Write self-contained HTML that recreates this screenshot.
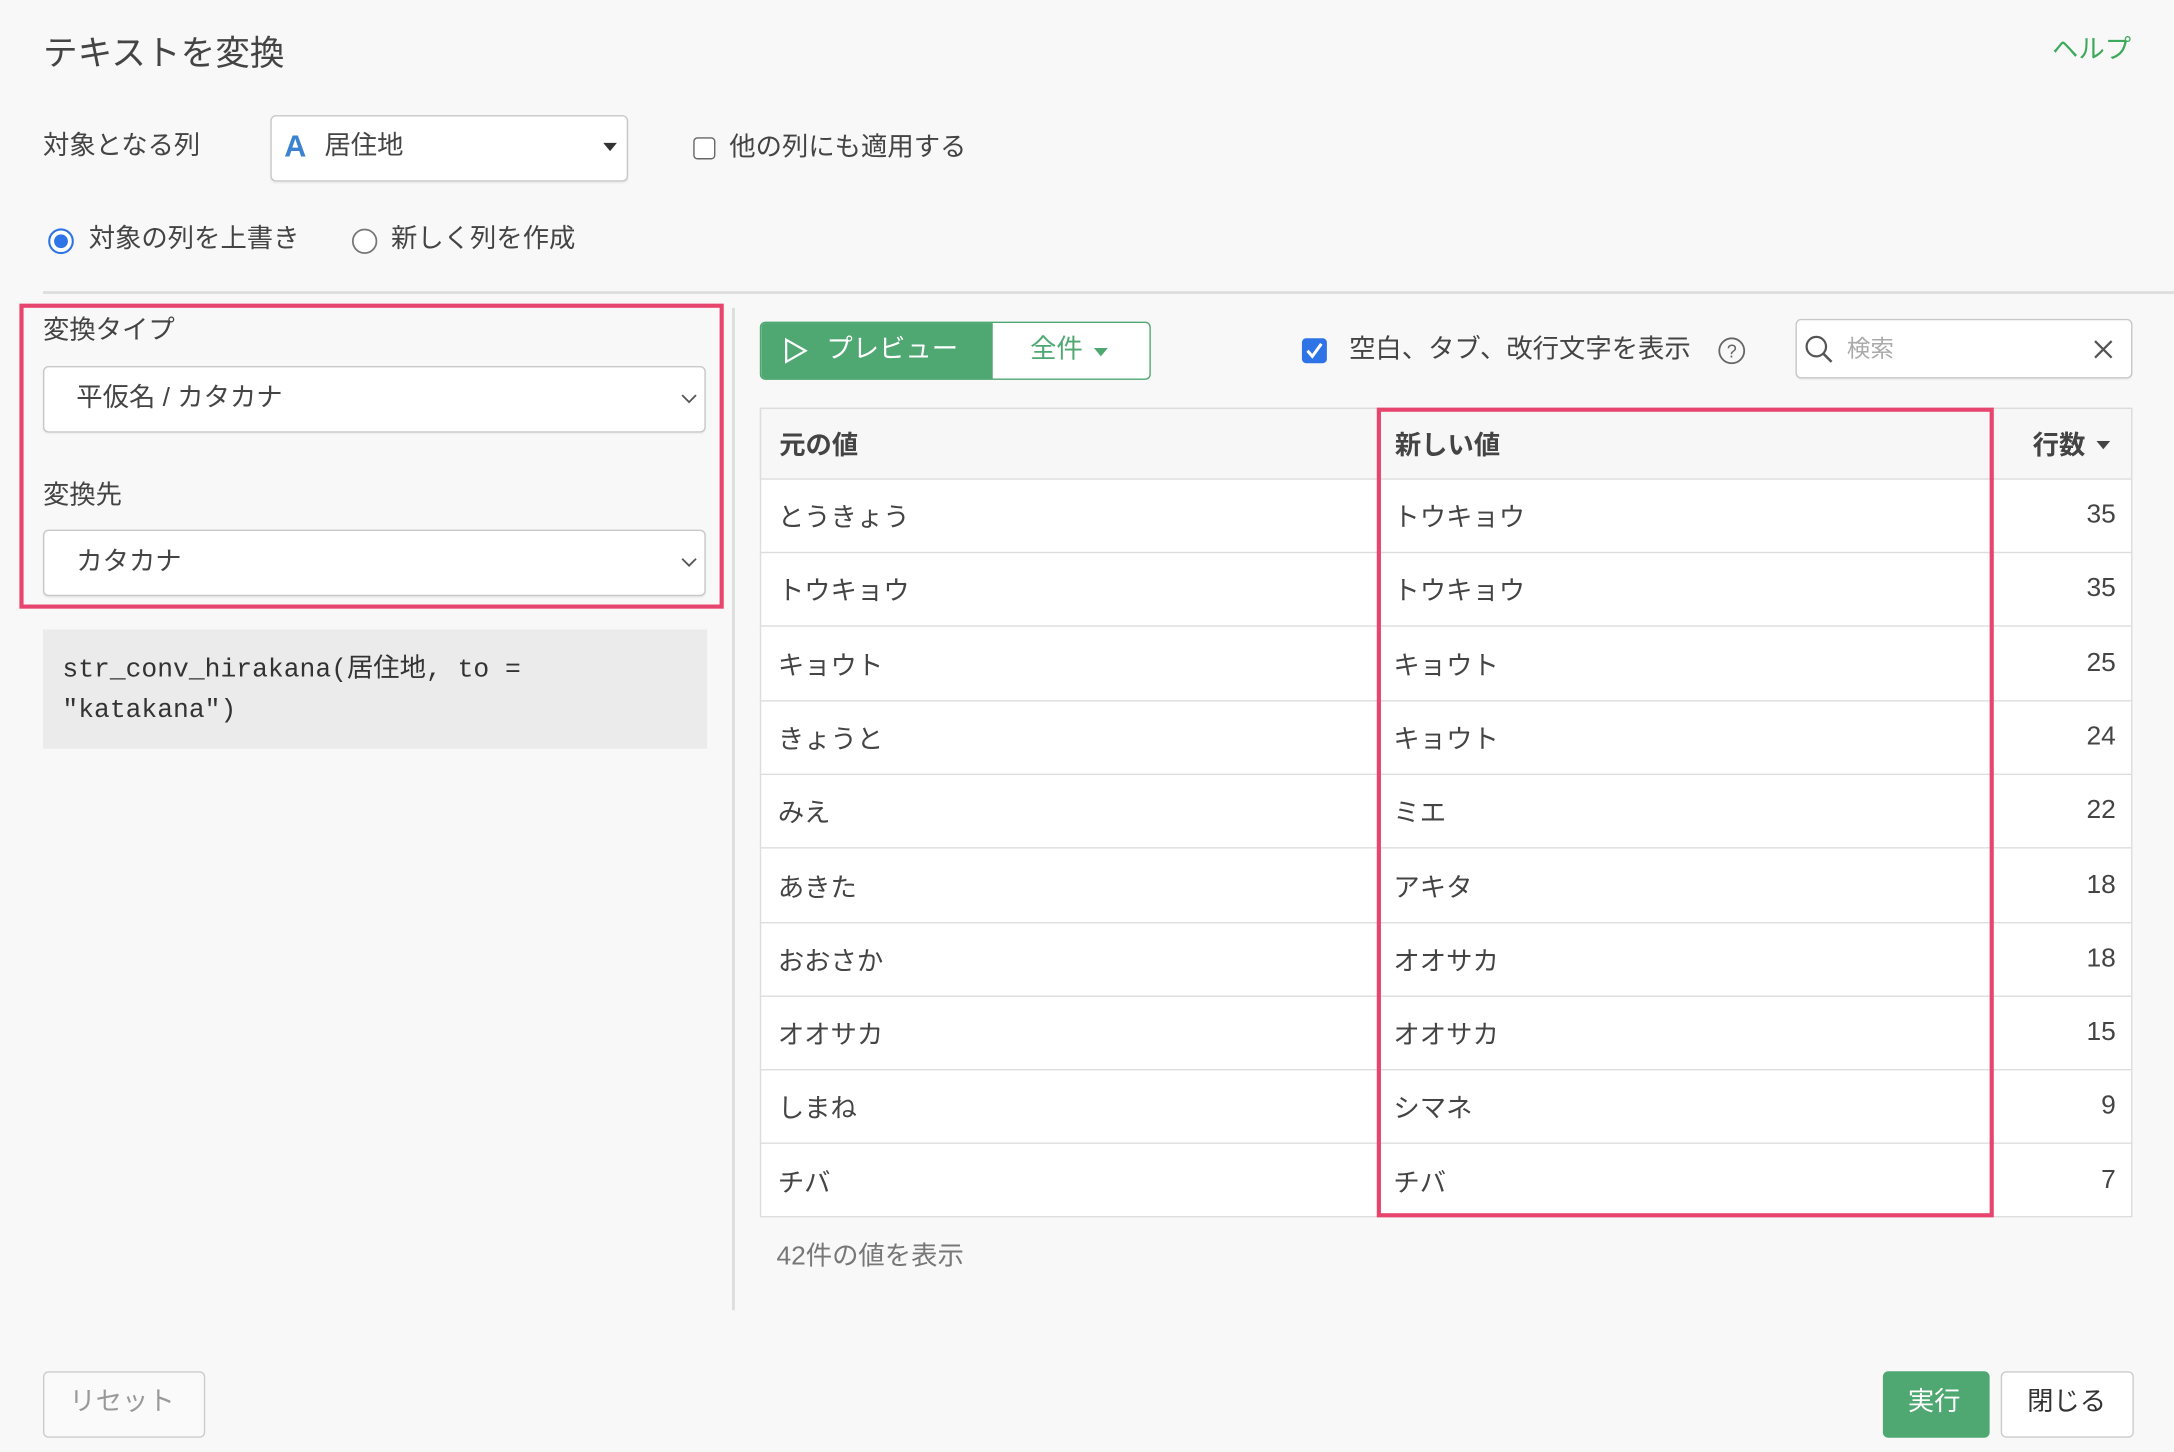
<!DOCTYPE html>
<html><head><meta charset="utf-8"><style>
html,body{margin:0;padding:0;background:#f8f8f8;overflow:hidden}
body{width:2174px;height:1452px}
#w{position:absolute;left:0;top:0;width:1568px;height:1047px;transform:scale(1.3865);transform-origin:0 0;font-family:"Liberation Sans","Noto Sans CJK JP",sans-serif;color:#444}
.a{position:absolute}
.t{position:absolute;font-size:19px;line-height:1;white-space:nowrap}
.sel{position:absolute;background:#fff;border:1px solid #c8c8c8;border-radius:4px;box-sizing:border-box;box-shadow:0 1px 1px rgba(0,0,0,.05)}
.row{position:absolute;left:548px;width:990px;border-top:1px solid #ddd;box-sizing:border-box;background:#fff}
.row span{position:absolute;top:50%;transform:translateY(-50%);font-size:19px;white-space:nowrap}
</style></head><body><div id="w">
<div class="t" style="left:31px;top:27px;font-size:25px;color:#444">テキストを変換</div>
<div class="t" style="left:1480px;top:27px;font-size:19px;color:#3daa5c">ヘルプ</div>

<div class="t" style="left:31px;top:96px">対象となる列</div>
<div class="sel" style="left:195px;top:83px;width:258px;height:48px"></div>
<div class="t" style="left:205px;top:95px;font-size:22px;font-weight:bold;color:#3b82d0">A</div>
<div class="t" style="left:234px;top:96px">居住地</div>
<svg class="a" style="left:435px;top:103px" width="10" height="7"><path d="M0 0H10L5 6Z" fill="#333"/></svg>
<div class="a" style="left:500px;top:99px;width:16px;height:16px;border:1.5px solid #666;border-radius:3px;background:#fff;box-sizing:border-box"></div>
<div class="t" style="left:526px;top:97px">他の列にも適用する</div>

<svg class="a" style="left:34px;top:164px" width="20" height="20"><circle cx="10" cy="10" r="8.5" fill="#fff" stroke="#2f74e6" stroke-width="1.5"/><circle cx="10" cy="10" r="5" fill="#2f74e6"/></svg>
<div class="t" style="left:64px;top:163px">対象の列を上書き</div>
<svg class="a" style="left:253px;top:164px" width="20" height="20"><circle cx="10" cy="10" r="8.5" fill="#fff" stroke="#777" stroke-width="1.3"/></svg>
<div class="t" style="left:282px;top:163px">新しく列を作成</div>

<div class="a" style="left:31px;top:210px;width:1537px;height:1.5px;background:#ddd"></div>
<div class="a" style="left:528px;top:222px;width:1.5px;height:723px;background:#ddd"></div>

<div class="t" style="left:31px;top:229px">変換タイプ</div>
<div class="sel" style="left:31px;top:264px;width:478px;height:48px"></div>
<div class="t" style="left:55px;top:278px">平仮名 / カタカナ</div>
<svg class="a" style="left:491px;top:284px" width="12" height="8"><path d="M1 1L6 6L11 1" fill="none" stroke="#555" stroke-width="1.3"/></svg>
<div class="t" style="left:31px;top:348px">変換先</div>
<div class="sel" style="left:31px;top:382px;width:478px;height:48px"></div>
<div class="t" style="left:55px;top:396px">カタカナ</div>
<svg class="a" style="left:491px;top:402px" width="12" height="8"><path d="M1 1L6 6L11 1" fill="none" stroke="#555" stroke-width="1.3"/></svg>
<div class="a" style="left:14px;top:219px;width:508px;height:220px;border:3.5px solid #e8456e;box-sizing:border-box"></div>

<div class="a" style="left:31px;top:454px;width:479px;height:86px;background:#ebebeb"></div>
<div class="a" style="left:45px;top:469px;font-family:'Liberation Mono','Noto Sans CJK JP',monospace;font-size:19px;line-height:29px;color:#333;white-space:pre">str_conv_hirakana(居住地, to =
"katakana")</div>

<div class="a" style="left:548px;top:232px;width:282px;height:42px;border:1.5px solid #4fa872;border-radius:4px;box-sizing:border-box;background:#fff;overflow:hidden">
<div class="a" style="left:0;top:0;width:167px;height:42px;background:#4fa872"></div>
</div>
<svg class="a" style="left:565px;top:243px" width="18" height="20"><path d="M2 2L16 10L2 18Z" fill="none" stroke="#fff" stroke-width="1.6"/></svg>
<div class="t" style="left:596px;top:243px;color:#fff">プレビュー</div>
<div class="t" style="left:743px;top:243px;color:#4fa872">全件</div>
<svg class="a" style="left:789px;top:251px" width="10" height="7"><path d="M0 0H10L5 6Z" fill="#4fa872"/></svg>

<svg class="a" style="left:938px;top:243px" width="20" height="20"><rect x="1" y="1" width="18" height="18" rx="3" fill="#2f74e6"/><path d="M5 10L8.5 14L15 5" fill="none" stroke="#fff" stroke-width="2.2"/></svg>
<div class="t" style="left:973px;top:243px">空白、タブ、改行文字を表示</div>
<svg class="a" style="left:1238px;top:242px" width="22" height="22"><circle cx="11" cy="11" r="9" fill="none" stroke="#666" stroke-width="1.3"/><text x="11" y="16" font-size="13" text-anchor="middle" fill="#666" font-family="Liberation Sans">?</text></svg>

<div class="sel" style="left:1295px;top:230px;width:243px;height:43px"></div>
<svg class="a" style="left:1301px;top:241px" width="22" height="22"><circle cx="9" cy="9" r="7" fill="none" stroke="#555" stroke-width="1.6"/><path d="M14 14L20 20" stroke="#555" stroke-width="1.8"/></svg>
<div class="t" style="left:1332px;top:243px;font-size:17px;color:#aaa">検索</div>
<svg class="a" style="left:1510px;top:245px" width="14" height="14"><path d="M1 1L13 13M13 1L1 13" stroke="#555" stroke-width="1.6"/></svg>

<div class="row" style="top:294px;height:51px;background:#f7f7f7;border:1px solid #ddd;border-bottom:none"><span style="left:13px;font-weight:bold">元の値</span><span style="left:457px;font-weight:bold">新しい値</span><span style="left:917px;font-weight:bold">行数</span></div>
<svg class="a" style="left:1512px;top:318px" width="10" height="7"><path d="M0 0H10L5 6Z" fill="#444"/></svg>
<div class="a" style="left:548px;top:294px;width:990px;height:584px;border:1px solid #ddd;box-sizing:border-box;pointer-events:none;z-index:2"></div>

<div class="row" style="top:345px;height:53px"><span style="left:13px">とうきょう</span><span style="left:457px">トウキョウ</span><span style="right:12px">35</span></div>
<div class="row" style="top:398px;height:53px"><span style="left:13px">トウキョウ</span><span style="left:457px">トウキョウ</span><span style="right:12px">35</span></div>
<div class="row" style="top:451px;height:54px"><span style="left:13px">キョウト</span><span style="left:457px">キョウト</span><span style="right:12px">25</span></div>
<div class="row" style="top:505px;height:53px"><span style="left:13px">きょうと</span><span style="left:457px">キョウト</span><span style="right:12px">24</span></div>
<div class="row" style="top:558px;height:53px"><span style="left:13px">みえ</span><span style="left:457px">ミエ</span><span style="right:12px">22</span></div>
<div class="row" style="top:611px;height:54px"><span style="left:13px">あきた</span><span style="left:457px">アキタ</span><span style="right:12px">18</span></div>
<div class="row" style="top:665px;height:53px"><span style="left:13px">おおさか</span><span style="left:457px">オオサカ</span><span style="right:12px">18</span></div>
<div class="row" style="top:718px;height:53px"><span style="left:13px">オオサカ</span><span style="left:457px">オオサカ</span><span style="right:12px">15</span></div>
<div class="row" style="top:771px;height:53px"><span style="left:13px">しまね</span><span style="left:457px">シマネ</span><span style="right:12px">9</span></div>
<div class="row" style="top:824px;height:54px"><span style="left:13px">チバ</span><span style="left:457px">チバ</span><span style="right:12px">7</span></div>
<div class="a" style="left:993px;top:294px;width:445px;height:584px;border:3.5px solid #e8456e;box-sizing:border-box;z-index:3"></div>

<div class="t" style="left:560px;top:897px;color:#777">42件の値を表示</div>

<div class="a" style="left:31px;top:989px;width:117px;height:48px;border:1.5px solid #ccc;border-radius:4px;box-sizing:border-box;background:#fafafa"></div>
<div class="t" style="left:50px;top:1002px;color:#999">リセット</div>
<div class="a" style="left:1358px;top:989px;width:77px;height:48px;background:#4fa872;border-radius:4px"></div>
<div class="t" style="left:1376px;top:1002px;color:#fff">実行</div>
<div class="a" style="left:1443px;top:989px;width:96px;height:48px;border:1.5px solid #ccc;border-radius:4px;box-sizing:border-box;background:#fff"></div>
<div class="t" style="left:1462px;top:1002px;color:#333">閉じる</div>
</div></body></html>
